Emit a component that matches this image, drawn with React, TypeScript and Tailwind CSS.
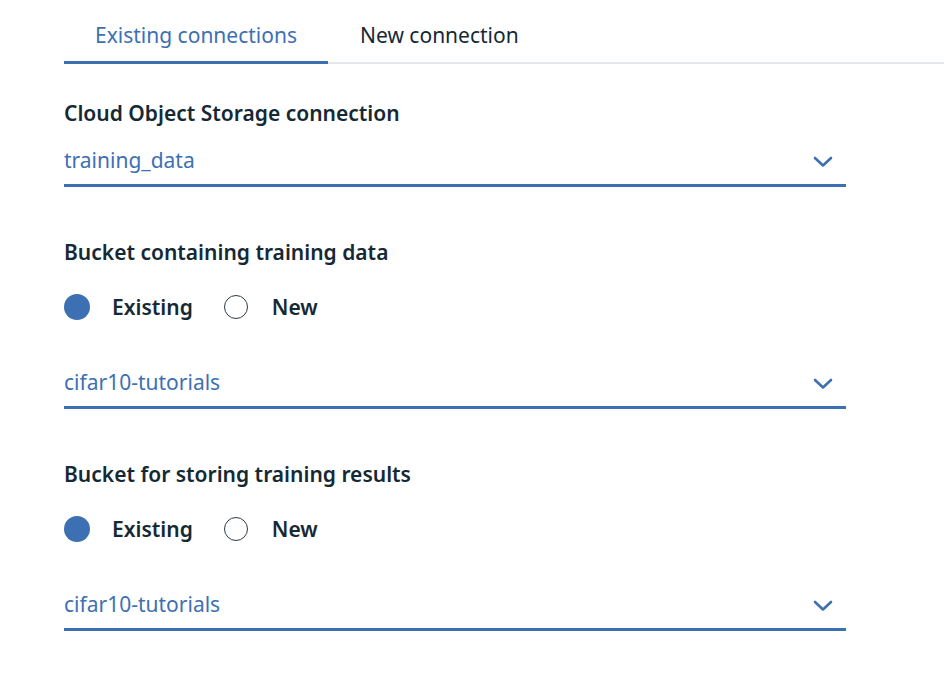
import React from "react";

const font = { fontFamily: '"Noto Sans", "Open Sans", Arial, sans-serif' };

function Chevron() {
  return (
    <svg width="20" height="12" viewBox="0 0 20 12" className="mr-[13px] mt-[3px]">
      <path d="M2 2 L10 9.5 L18 2" fill="none" stroke="#3d70b2" strokeWidth="2.6" strokeLinecap="round" strokeLinejoin="round" />
    </svg>
  );
}

function Dropdown({ value }: { value: string }) {
  return (
    <div className="w-[782px] flex items-center justify-between pb-[12px] border-b-[3px] border-[#3d70b2]">
      <span className="text-[21px] leading-[24px] text-[#3d70b2]">{value}</span>
      <Chevron />
    </div>
  );
}

function Radios() {
  return (
    <div className="flex items-center h-[26px]">
      <span className="w-[26px] h-[26px] rounded-full bg-[#3d70b2]" />
      <span className="ml-[22px] text-[21px] leading-[24px] font-semibold text-[#152935]">Existing</span>
      <span className="ml-[31px] w-[24px] h-[24px] rounded-full border-[1.5px] border-[#2e3a42]" />
      <span className="ml-[24px] text-[21px] leading-[24px] font-semibold text-[#152935]">New</span>
    </div>
  );
}

export default function App() {
  return (
    <div className="w-[944px] h-[695px] bg-white overflow-hidden" style={font}>
      <div className="ml-[64px] h-[64px] flex border-b-2 border-[#e4e8ea]">
        <div className="w-[264px] h-[64px] -mb-[2px] border-b-[3px] border-[#3d70b2] flex justify-center pt-[23px]">
          <span className="text-[21px] leading-[24px] text-[#3d70b2]">Existing connections</span>
        </div>
        <div className="px-[32px] pt-[23px]">
          <span className="text-[21px] leading-[24px] text-[#152935]">New connection</span>
        </div>
      </div>
      <div className="pl-[64px] flex flex-col">
        <div className="mt-[37px] text-[21px] leading-[24px] font-semibold text-[#152935]">Cloud Object Storage connection</div>
        <div className="mt-[23px]"><Dropdown value="training_data" /></div>
        <div className="mt-[53px] text-[21px] leading-[24px] font-semibold text-[#152935]">Bucket containing training data</div>
        <div className="mt-[30px]"><Radios /></div>
        <div className="mt-[50px]"><Dropdown value="cifar10-tutorials" /></div>
        <div className="mt-[53px] text-[21px] leading-[24px] font-semibold text-[#152935]">Bucket for storing training results</div>
        <div className="mt-[30px]"><Radios /></div>
        <div className="mt-[50px]"><Dropdown value="cifar10-tutorials" /></div>
      </div>
    </div>
  );
}
